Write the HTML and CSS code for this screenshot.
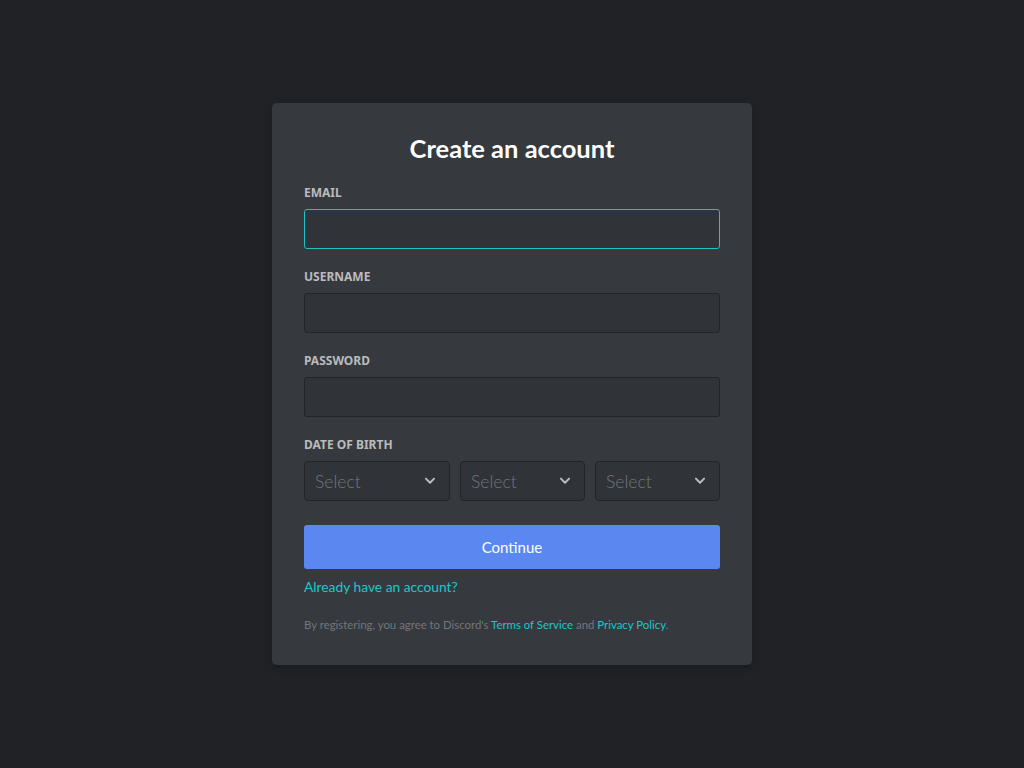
FILE: index.html
```html
<!DOCTYPE html>
<html lang="en">
<head>
    <meta charset="UTF-8">
    <meta name="viewport" content="width=device-width, initial-scale=1.0">
    <title>Create an account</title>
    <link rel="stylesheet" href="styles.css">
</head>
<body>
    <div class="card">
        <h1 class="title">Create an account</h1>
        <form class="form">
            <div class="field">
                <label class="label">Email</label>
                <input type="email" class="input input-focus">
            </div>
            <div class="field">
                <label class="label">Username</label>
                <input type="text" class="input">
            </div>
            <div class="field">
                <label class="label">Password</label>
                <input type="password" class="input">
            </div>
            <div class="field">
                <label class="label">Date of Birth</label>
                <div class="dob">
                    <div class="select select-month">
                        <span>Select</span>
                        <svg width="14" height="14" viewBox="0 0 24 24"><path d="M5 8l7 7 7-7" fill="none" stroke="#b9bbbe" stroke-width="3.4" stroke-linecap="round" stroke-linejoin="round"/></svg>
                    </div>
                    <div class="select">
                        <span>Select</span>
                        <svg width="14" height="14" viewBox="0 0 24 24"><path d="M5 8l7 7 7-7" fill="none" stroke="#b9bbbe" stroke-width="3.4" stroke-linecap="round" stroke-linejoin="round"/></svg>
                    </div>
                    <div class="select">
                        <span>Select</span>
                        <svg width="14" height="14" viewBox="0 0 24 24"><path d="M5 8l7 7 7-7" fill="none" stroke="#b9bbbe" stroke-width="3.4" stroke-linecap="round" stroke-linejoin="round"/></svg>
                    </div>
                </div>
            </div>
            <button type="button" class="continue-button">Continue</button>
            <a href="#" class="login-link">Already have an account?</a>
            <p class="terms">By registering, you agree to Discord's <a href="#">Terms of Service</a> and <a href="#">Privacy Policy</a>.</p>
        </form>
    </div>
</body>
</html>
```

FILE: styles.css
```css
body {
    font-family: Lato, "Noto Sans", sans-serif;
    margin: 0;
    height: 100vh;
    display: flex;
    align-items: center;
    justify-content: center;
    background-color: #202225;
}
.card {
    width: 480px;
    box-sizing: border-box;
    padding: 32px;
    background-color: #36393d;
    border-radius: 5px;
    box-shadow: 0 2px 10px rgba(0, 0, 0, 0.2);
}
.title {
    margin: 0 0 24px;
    font-size: 25.5px;
    line-height: 26px;
    font-weight: 700;
    color: #ffffff;
    text-align: center;
}
.form {
    display: flex;
    flex-direction: column;
}
.field {
    margin-bottom: 20px;
}
.field:nth-child(4) {
    margin-bottom: 24px;
}
.label {
    display: block;
    margin-bottom: 8px;
    font-family: "Noto Sans", sans-serif;
    font-size: 12px;
    line-height: 16px;
    font-weight: 700;
    text-transform: uppercase;
    color: #b9bbbe;
}
.input {
    display: block;
    width: 100%;
    height: 40px;
    box-sizing: border-box;
    padding: 10px;
    background-color: #303337;
    border: 1px solid #222427;
    border-radius: 3px;
    color: #dcddde;
    font-size: 16px;
    outline: none;
}
.input-focus {
    border-color: #1cc2c9;
}
.dob {
    display: flex;
    gap: 10px;
}
.select {
    flex: 1;
    height: 40px;
    box-sizing: border-box;
    padding: 0 12px 0 10px;
    display: flex;
    align-items: center;
    justify-content: space-between;
    background-color: #303337;
    border: 1px solid #222427;
    border-radius: 4px;
    color: #72767d;
    font-size: 17.5px;
    font-weight: 300;
}
.select-month {
    flex: 0 0 146px;
}
.continue-button {
    height: 44px;
    padding-bottom: 2px;
    background-color: #5a87f0;
    color: #ffffff;
    border: none;
    border-radius: 3px;
    font-family: inherit;
    font-size: 15px;
    font-weight: 400;
    cursor: pointer;
}
.login-link {
    margin-top: 8px;
    font-size: 13.8px;
    line-height: 20px;
    color: #1cc8cc;
    text-decoration: none;
    align-self: flex-start;
}
.terms {
    margin: 20px 0 0;
    font-size: 11.4px;
    line-height: 16px;
    color: #72767d;
}
.terms a {
    color: #1cc8cc;
    text-decoration: none;
}
```
